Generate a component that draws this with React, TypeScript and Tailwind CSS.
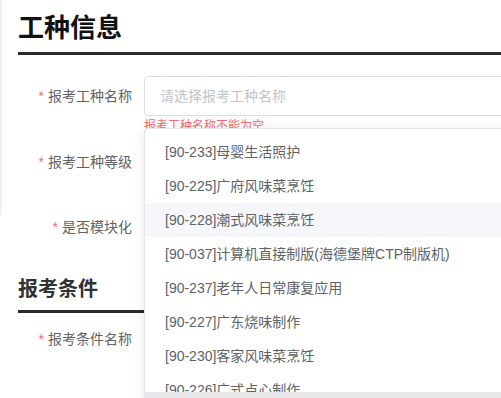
const options = [
  "[90-233]母婴生活照护",
  "[90-225]广府风味菜烹饪",
  "[90-228]潮式风味菜烹饪",
  "[90-037]计算机直接制版(海德堡牌CTP制版机)",
  "[90-237]老年人日常康复应用",
  "[90-227]广东烧味制作",
  "[90-230]客家风味菜烹饪",
  "[90-226]广式点心制作",
];

function Label({ text }: { text: string }) {
  return (
    <div className="flex h-10 w-[126px] shrink-0 items-center justify-end pr-3 text-sm text-[#606266]">
      <span className="mr-1 text-[#f56c6c]">*</span>
      {text}
    </div>
  );
}

export default function App() {
  return (
    <div className="relative h-[398px] w-[501px] overflow-hidden bg-white font-['Liberation_Sans','Noto_Sans_CJK_SC',sans-serif]">
      <div className="absolute left-0 top-0 h-[215px] w-[2px] bg-[#f0f0f0]" />

      <div className="pl-[18px]">
        <h2 className="w-[500px] border-b-[3px] border-[#2b2b2b] pb-[10px] pt-[14px] text-[26px] font-bold leading-[28px] text-[#111]">
          工种信息
        </h2>

        <div className="mt-[21px] flex">
          <Label text="报考工种名称" />
          <div className="flex flex-col">
            <div className="flex h-10 w-[400px] items-center rounded border border-[#dcdfe6] pl-[15px] text-sm text-[#c0c4cc]">
              请选择报考工种名称
            </div>
            <div className="h-[26px] pt-[3px] text-xs leading-[14px] text-[#f56c6c]">
              报考工种名称不能为空
            </div>
          </div>
        </div>

        <div className="flex">
          <Label text="报考工种等级" />
        </div>

        <div className="mt-[25px] flex">
          <Label text="是否模块化" />
        </div>

        <h2 className="mt-[32px] w-[500px] border-b-[3px] border-[#2b2b2b] pb-[11px] text-xl font-bold leading-5 text-[#303133]">
          报考条件
        </h2>

        <div className="mt-[6px] flex">
          <Label text="报考条件名称" />
        </div>
      </div>

      <div className="absolute left-[144px] top-[128px] flex h-[280px] w-[400px] flex-col rounded border border-[#e4e7ed] bg-white shadow-[0_2px_12px_0_rgba(0,0,0,0.1)]">
        <ul className="flex-1 overflow-hidden py-[6px]">
          {options.map((o, i) => (
            <li
              key={o}
              className={
                i === 2
                  ? "h-[34px] bg-[#f5f7fa] px-5 text-sm leading-[34px] text-[#606266]"
                  : "h-[34px] px-5 text-sm leading-[34px] text-[#606266]"
              }
            >
              {o}
            </li>
          ))}
        </ul>
        <div className="absolute left-0 top-[263px] h-[8px] w-full bg-[#e8e8e8]" />
      </div>
    </div>
  );
}
